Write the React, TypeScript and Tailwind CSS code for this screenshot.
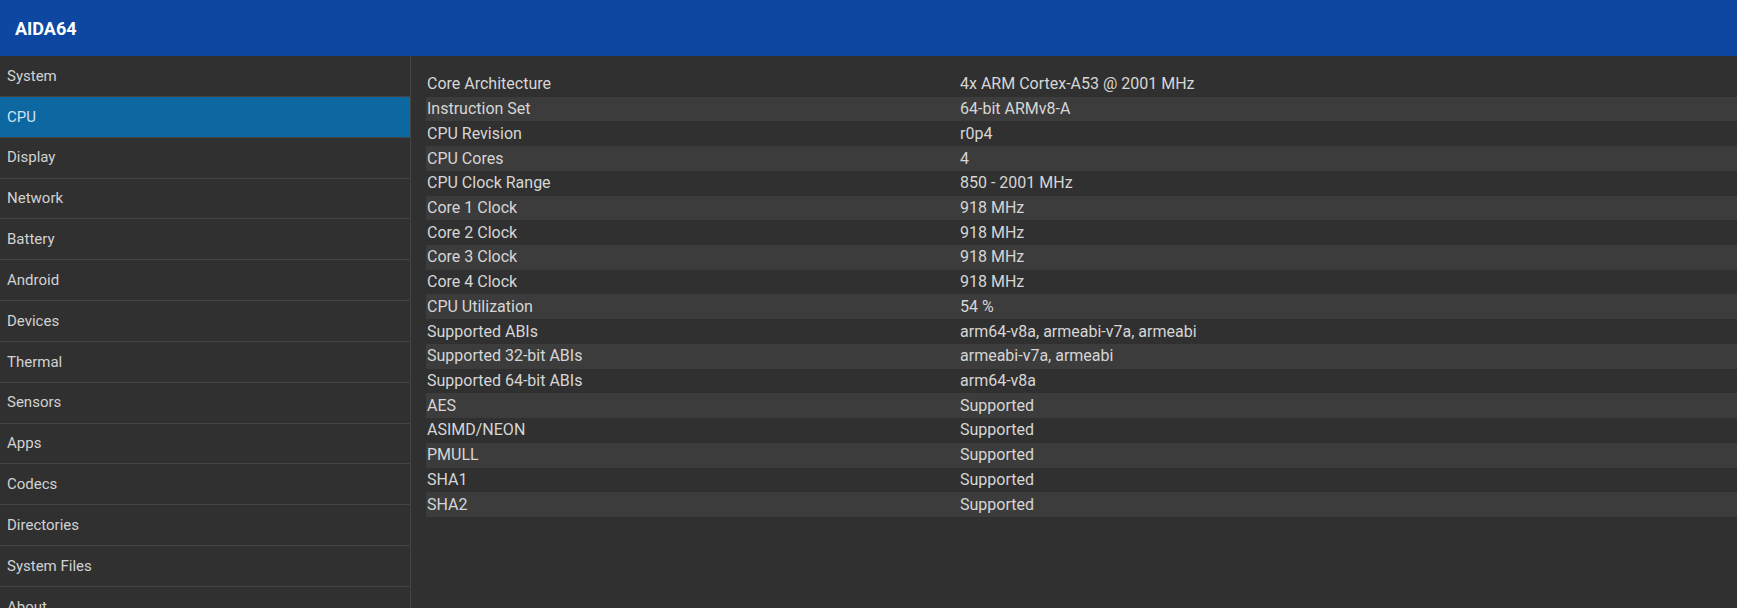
import React from "react";

const menu = [
  "System",
  "CPU",
  "Display",
  "Network",
  "Battery",
  "Android",
  "Devices",
  "Thermal",
  "Sensors",
  "Apps",
  "Codecs",
  "Directories",
  "System Files",
  "About",
];

const rows: [string, string][] = [
  ["Core Architecture", "4x ARM Cortex-A53 @ 2001 MHz"],
  ["Instruction Set", "64-bit ARMv8-A"],
  ["CPU Revision", "r0p4"],
  ["CPU Cores", "4"],
  ["CPU Clock Range", "850 - 2001 MHz"],
  ["Core 1 Clock", "918 MHz"],
  ["Core 2 Clock", "918 MHz"],
  ["Core 3 Clock", "918 MHz"],
  ["Core 4 Clock", "918 MHz"],
  ["CPU Utilization", "54 %"],
  ["Supported ABIs", "arm64-v8a, armeabi-v7a, armeabi"],
  ["Supported 32-bit ABIs", "armeabi-v7a, armeabi"],
  ["Supported 64-bit ABIs", "arm64-v8a"],
  ["AES", "Supported"],
  ["ASIMD/NEON", "Supported"],
  ["PMULL", "Supported"],
  ["SHA1", "Supported"],
  ["SHA2", "Supported"],
];

export default function App() {
  return (
    <div
      className="w-[1737px] h-[608px] overflow-hidden bg-[#303030] flex flex-col"
      style={{ fontFamily: "Roboto, 'Noto Sans', sans-serif" }}
    >
      <header className="h-[56px] shrink-0 bg-[#0d47a1] flex items-center pl-[15px]">
        <span className="text-white text-[18px] font-bold">AIDA64</span>
      </header>
      <div className="flex flex-1 min-h-0">
        <nav className="w-[411px] shrink-0 border-r border-[#444444] flex flex-col">
          {menu.map((m) => (
            <div
              key={m}
              className={
                "h-[40.85px] shrink-0 flex items-center pl-[7px] text-[15px] border-b border-[#444444] " +
                (m === "CPU" ? "bg-[#0d67a1] text-[#cfe4f5]" : "text-[#d2d2d2]")
              }
            >
              {m}
            </div>
          ))}
        </nav>
        <main className="flex-1 pt-[16px] pl-[15px]">
          {rows.map(([k, v], i) => (
            <div
              key={k}
              className={
                "h-[24.73px] flex items-center text-[16px] text-[#d6d6d6] " +
                (i % 2 === 1 ? "bg-[#3c3c3c]" : "")
              }
            >
              <div className="w-[534px] shrink-0 pl-[1px]">{k}</div>
              <div>{v}</div>
            </div>
          ))}
        </main>
      </div>
    </div>
  );
}
